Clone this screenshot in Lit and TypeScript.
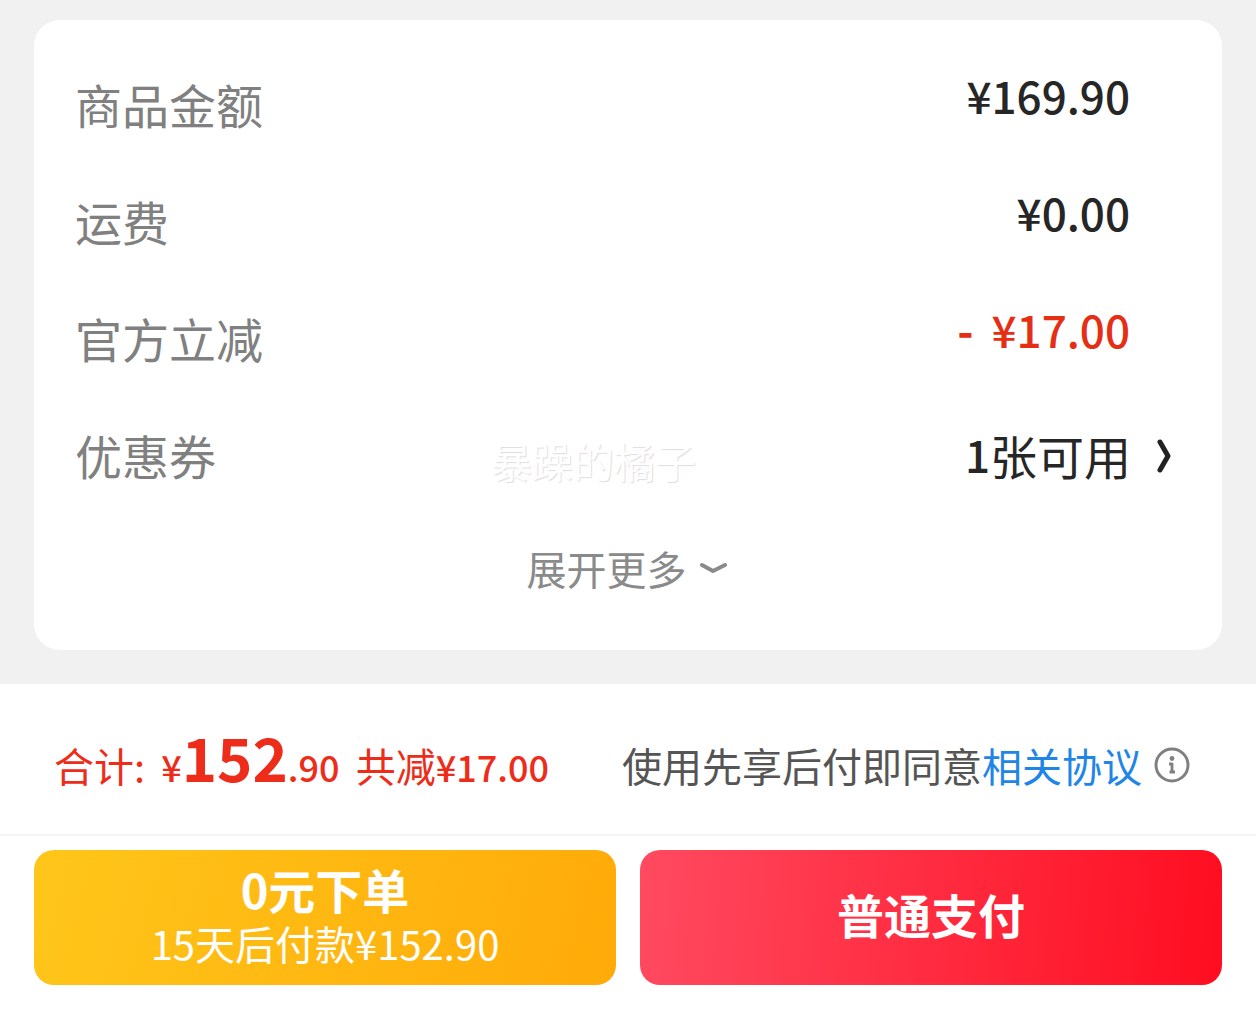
import { LitElement, html, css, nothing } from "lit";
import { customElement, property } from "lit/decorators.js";

@customElement("fee-row")
class FeeRow extends LitElement {
  @property() label = "";
  @property() amount = "";
  @property({ type: Boolean }) discount = false;

  static styles = css`
    :host { display: block; }
    .row { display: flex; justify-content: space-between; align-items: flex-start; height: 117px; }
    .label { color: #808080; font-size: 47px; line-height: 117px; }
    .amount { color: #262626; font-size: 44px; font-weight: 500; line-height: 100px; margin-right: 48px; }
    .discount { color: #e62e14; }
    .minus { margin-right: 18px; font-weight: 700; }
  `;

  render() {
    return html`<div class="row">
      <span class="label">${this.label}</span>
      <span class="amount ${this.discount ? "discount" : ""}">${this.discount ? html`<span class="minus">-</span>` : nothing}${this.amount}</span>
    </div>`;
  }
}

@customElement("app-root")
class AppRoot extends LitElement {
  static styles = css`
    :host {
      display: block;
      min-height: 100vh;
      background: #f1f1f1;
      font-family: "Noto Sans CJK SC", sans-serif;
      overflow: hidden;
    }
    * { box-sizing: border-box; }
    button { border: 0; margin: 0; padding: 0; background: none; font: inherit; cursor: pointer; }
    .page { display: flex; flex-direction: column; min-height: 100vh; }
    .card {
      position: relative;
      margin: 20px 34px 34px;
      padding: 25px 44px 28px 41px;
      background: #fff;
      border-radius: 26px;
    }
    .coupon { display: flex; width: 100%; height: 117px; align-items: center; justify-content: space-between; font-size: 47px; line-height: 117px; color: #808080; }
    .value { display: flex; align-items: center; color: #262626; }
    .one { font-size: 44px; font-weight: 500; }
    .arrow { width: 20px; height: 40px; margin-left: 24px; margin-right: 3px; }
    .more { display: flex; align-items: center; margin: 0 auto; height: 109px; font-size: 40px; line-height: 60px; color: #8a8a8a; gap: 12px; }
    .more svg { width: 28px; height: 16px; }
    .watermark {
      position: absolute;
      left: 50%;
      top: 410px;
      transform: translateX(-137px);
      font-size: 41px;
      line-height: 60px;
      color: #fff;
      text-shadow: 1px 1px 1px #dcdce2;
      pointer-events: none;
    }
    .footer { flex: 1; background: #fff; }
    .summary { display: flex; justify-content: space-between; align-items: baseline; height: 152px; padding: 32px 66px 0 54px; border-bottom: 2px solid #f4f4f4; }
    .total { display: flex; align-items: baseline; color: #ee2c1a; font-size: 40px; line-height: 60px; white-space: nowrap; }
    .num { font-size: 36px; font-weight: 500; }
    .big { font-size: 60px; line-height: 80px; font-weight: 700; }
    .gap { margin-left: 16px; }
    .terms { display: flex; align-items: center; font-size: 40px; line-height: 60px; color: #555; white-space: nowrap; }
    .terms a { color: #1f86e8; text-decoration: none; }
    .info { width: 36px; height: 36px; margin-left: 12px; }
    .info svg, .arrow svg { display: block; }
    .actions { display: grid; grid-template-columns: 1fr 1fr; gap: 24px; padding: 14px 34px 41px; }
    .btn { height: 135px; border-radius: 20px; color: #fff; display: flex; flex-direction: column; align-items: center; justify-content: center; padding-bottom: 4px; }
    .later { background: linear-gradient(105deg, #ffc61a, #ffaa08); }
    .pay { background: linear-gradient(95deg, #ff4a60, #ff0d20); padding-bottom: 8px; }
    .title { font-size: 47px; line-height: 54px; font-weight: 700; }
    .sub { font-size: 40px; line-height: 54px; }
  `;

  render() {
    return html`<main class="page">
      <section class="card">
        <fee-row label="商品金额" amount="¥169.90"></fee-row>
        <fee-row label="运费" amount="¥0.00"></fee-row>
        <fee-row label="官方立减" amount="¥17.00" discount></fee-row>
        <button class="coupon">
          <span>优惠券</span>
          <span class="value"><span class="one">1</span>张可用
            <svg class="arrow" viewBox="0 0 20 40" fill="none" stroke="#222" stroke-width="5" stroke-linecap="round" stroke-linejoin="round"><path d="M5 7 L13 21 L5 35" /></svg>
          </span>
        </button>
        <button class="more">展开更多
          <svg viewBox="0 0 28 16" fill="none" stroke="#8a8a8a" stroke-width="4" stroke-linecap="round" stroke-linejoin="round"><path d="M3 5 L14 11 L26 5" /></svg>
        </button>
        <span class="watermark">暴躁的橘子</span>
      </section>
      <section class="footer">
        <div class="summary">
          <div class="total">
            <span>合计:</span><span class="num gap">¥</span><span class="big">152</span><span class="num">.90</span>
            <span class="gap">共减</span><span class="num">¥17.00</span>
          </div>
          <div class="terms">
            <span>使用先享后付即同意</span><a href="#terms">相关协议</a>
            <button class="info" aria-label="说明">
              <svg width="36" height="36" viewBox="0 0 36 36" fill="none" stroke="#808080" stroke-width="3"><circle cx="18" cy="18" r="16" /><circle cx="18" cy="11.5" r="2.4" fill="#808080" stroke="none" /><path d="M15 17 H18.5 M18 16 V26 M15.5 25 H21" stroke-width="2.8" /></svg>
            </button>
          </div>
        </div>
        <div class="actions">
          <button class="btn later"><span class="title">0元下单</span><span class="sub">15天后付款¥152.90</span></button>
          <button class="btn pay"><span class="title">普通支付</span></button>
        </div>
      </section>
    </main>`;
  }
}
